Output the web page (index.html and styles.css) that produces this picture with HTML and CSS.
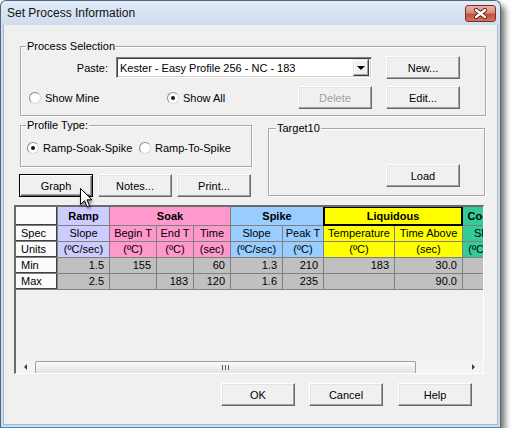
FILE: index.html
```html
<!DOCTYPE html>
<html lang="en">
<head>
  <meta charset="UTF-8">
  <title>Set Process Information</title>
  <link rel="stylesheet" href="styles.css">
</head>
<body>
  <div class="window">
    <!-- title bar -->
    <div class="titlebar">
      <span class="title">Set Process Information</span>
      <div class="close">
        <svg width="29" height="15" viewBox="0 0 29 15">
          <path d="M10 4 L19 11 M19 4 L10 11" stroke="#5a2018" stroke-width="4.2" stroke-linecap="round" fill="none"/>
          <path d="M10 4 L19 11 M19 4 L10 11" stroke="#fff" stroke-width="2.4" stroke-linecap="round" fill="none"/>
        </svg>
      </div>
    </div>

    <div class="client">
      <!-- process selection -->
      <div class="group process">
        <span class="legend">Process Selection</span>
        <div class="paste-row">
          <span class="paste-label">Paste:</span>
          <div class="combo">
            <span class="combo-text">Kester - Easy Profile 256 - NC - 183</span>
            <span class="combo-btn"><span class="arrow-down"></span></span>
          </div>
          <button class="btn gap14">New...</button>
        </div>
        <div class="show-row">
          <span class="radio-opt mine"><span class="radio"></span>Show Mine</span>
          <span class="radio-opt all"><span class="radio checked"></span>Show All</span>
          <button class="btn" disabled>Delete</button>
          <button class="btn gap14">Edit...</button>
        </div>
      </div>

      <div class="middle">
        <div class="left-col">
          <div class="group profile">
            <span class="legend">Profile Type:</span>
            <div class="profile-row">
              <span class="radio-opt ramp-soak"><span class="radio checked"></span>Ramp-Soak-Spike</span>
              <span class="radio-opt"><span class="radio"></span>Ramp-To-Spike</span>
            </div>
          </div>
          <div class="btn-row">
            <button class="btn default">Graph</button>
            <button class="btn">Notes...</button>
            <button class="btn">Print...</button>
          </div>
        </div>
        <div class="group target">
          <span class="legend">Target10</span>
          <button class="btn">Load</button>
        </div>
      </div>

      <!-- spec grid -->
      <div class="grid">
        <div class="sheet-area">
          <div class="sheet">
            <div class="cell rh"></div>
            <div class="cell hd ramp">Ramp</div>
            <div class="cell hd soak span3">Soak</div>
            <div class="cell hd spike span2">Spike</div>
            <div class="cell hd liq span2 focus">Liquidous</div>
            <div class="cell hd cool">Cooling</div>

            <div class="cell rh">Spec</div>
            <div class="cell ramp">Slope</div>
            <div class="cell soak">Begin T</div>
            <div class="cell soak">End T</div>
            <div class="cell soak">Time</div>
            <div class="cell spike">Slope</div>
            <div class="cell spike">Peak T</div>
            <div class="cell liq">Temperature</div>
            <div class="cell liq">Time Above</div>
            <div class="cell cool">Slope</div>

            <div class="cell rh">Units</div>
            <div class="cell ramp">(ºC/sec)</div>
            <div class="cell soak">(ºC)</div>
            <div class="cell soak">(ºC)</div>
            <div class="cell soak">(sec)</div>
            <div class="cell spike">(ºC/sec)</div>
            <div class="cell spike">(ºC)</div>
            <div class="cell liq">(ºC)</div>
            <div class="cell liq">(sec)</div>
            <div class="cell cool">(ºC/sec)</div>

            <div class="cell rh">Min</div>
            <div class="cell val">1.5</div>
            <div class="cell val">155</div>
            <div class="cell val"></div>
            <div class="cell val">60</div>
            <div class="cell val">1.3</div>
            <div class="cell val">210</div>
            <div class="cell val">183</div>
            <div class="cell val">30.0</div>
            <div class="cell val"></div>

            <div class="cell rh">Max</div>
            <div class="cell val">2.5</div>
            <div class="cell val"></div>
            <div class="cell val">183</div>
            <div class="cell val">120</div>
            <div class="cell val">1.6</div>
            <div class="cell val">235</div>
            <div class="cell val"></div>
            <div class="cell val">90.0</div>
            <div class="cell val"></div>
          </div>
        </div>
        <div class="hscroll">
          <span class="sb-arrow"><span class="arrow-left"></span></span>
          <span class="thumb"><span class="grip"></span></span>
          <span class="track"></span>
          <span class="sb-arrow"><span class="arrow-right"></span></span>
        </div>
      </div>

      <div class="footer">
        <button class="btn">OK</button>
        <button class="btn gap14">Cancel</button>
        <button class="btn gap15">Help</button>
      </div>
    </div>

    <!-- mouse pointer over Graph -->
    <svg class="cursor" width="14" height="21" viewBox="0 0 14 21">
      <path d="M0.5 0.5 L0.5 16.5 L4.5 12.7 L7.2 18.8 L9.6 17.8 L7 11.8 L12 11.8 Z" fill="#fff" stroke="#000" stroke-width="1" stroke-linejoin="round"/>
    </svg>
  </div>
</body>
</html>
```

FILE: styles.css
```css
* {
  box-sizing: border-box;
}

body {
  margin: 0;
  background: #fff;
  font-family: "Liberation Sans", Arial, sans-serif;
  font-size: 11px;
  color: #000;
}

/* window frame */
.window {
  position: relative;
  width: 501px;
  height: 428px;
  padding: 0 2px 2px;
  display: flex;
  flex-direction: column;
  border: 1px solid #52667e;
  border-bottom-color: #3a8fc4;
  border-radius: 6px 6px 0 0;
  background: linear-gradient(#e2ebf7, #cfdcee 24px, #cfdcee);
  box-shadow: 4px 5px 6px rgba(0, 0, 0, .55);
}

.titlebar {
  height: 24px;
  display: flex;
  align-items: center;
  justify-content: space-between;
  padding: 0 2px 0 4px;
}

.title {
  font-size: 12px;
  color: #111;
}

.close {
  width: 31px;
  height: 17px;
  border: 1px solid #7a2f26;
  border-radius: 3px;
  background: linear-gradient(#ecb3a7, #d98c7c 45%, #c4503e 55%, #d3735f);
  display: flex;
  align-items: center;
  justify-content: center;
}

.client {
  flex: 1;
  background: #f0f0f0;
  border: 1px solid #a7b9d0;
  border-top: 0;
}

/* group boxes */
.group {
  position: relative;
  border: 1px solid #a8a8a8;
  box-shadow: inset 1px 1px #fff, 1px 1px #fff;
}

.legend {
  position: absolute;
  top: -7px;
  left: 5px;
  padding: 0 1px;
  line-height: 13px;
  background: #f0f0f0;
}

.process {
  width: 466px;
  height: 70px;
  margin: 21px 0 0 16px;
}

.paste-row {
  display: flex;
  align-items: center;
  height: 23px;
  margin-top: 9px;
}

.paste-label {
  width: 87px;
  text-align: right;
}

.combo {
  width: 256px;
  height: 21px;
  margin-left: 8px;
  display: flex;
  align-items: center;
  justify-content: space-between;
  background: #fff;
  border: 1px solid;
  border-color: #808080 #fff #fff #808080;
  box-shadow: inset 1px 1px #404040, inset -1px -1px #d4d0c8;
  padding: 1px 2px 1px 3px;
}

.combo-btn {
  width: 16px;
  height: 17px;
  display: flex;
  align-items: center;
  justify-content: center;
  background: #f0f0f0;
  border: 1px solid;
  border-color: #e3e3e3 #404040 #404040 #e3e3e3;
  box-shadow: inset -1px -1px #a0a0a0, inset 1px 1px #fff;
}

.arrow-down {
  border-left: 4px solid transparent;
  border-right: 4px solid transparent;
  border-top: 4px solid #000;
}

.show-row {
  display: flex;
  align-items: center;
  height: 23px;
  margin-top: 7px;
  padding-left: 8px;
}

.radio-opt {
  display: flex;
  align-items: center;
  gap: 4px;
}

.mine {
  width: 138px;
}

.all {
  width: 131px;
}

.radio {
  width: 12px;
  height: 12px;
  border-radius: 50%;
  border: 1px solid;
  border-color: #8a8a8a #d8d8d8 #d8d8d8 #8a8a8a;
  background: #fff;
  display: flex;
  align-items: center;
  justify-content: center;
}

.radio.checked::after {
  content: "";
  width: 4px;
  height: 4px;
  border-radius: 50%;
  background: #111;
}

/* buttons */
.btn {
  width: 74px;
  height: 23px;
  padding: 0;
  font: inherit;
  color: #000;
  background: #f0f0f0;
  border: 1px solid;
  border-color: #fff #696969 #696969 #fff;
  box-shadow: inset -1px -1px #a0a0a0, inset 1px 1px #e3e3e3;
}

.btn:disabled {
  color: #a0a0a0;
}

.btn.default {
  border-color: #000;
  box-shadow: inset 1px 1px #fff, inset -1px -1px #696969, inset -2px -2px #a0a0a0;
}

.gap14 {
  margin-left: 14px;
}

.gap15 {
  margin-left: 15px;
}

.middle {
  display: flex;
  align-items: flex-start;
  margin: 9px 0 0 16px;
}

.left-col {
  width: 232px;
}

.profile {
  height: 42px;
}

.profile-row {
  display: flex;
  align-items: center;
  height: 14px;
  margin-top: 15px;
  padding-left: 6px;
}

.ramp-soak {
  width: 112px;
}

.btn-row {
  display: flex;
  gap: 5px;
  margin: 7px 0 0 -1px;
}

.target {
  width: 217px;
  height: 68px;
  margin: 3px 0 0 16px;
  padding: 35px 0 0 117px;
}

.target .legend {
  left: 7px;
}

/* spec grid */
.grid {
  width: 470px;
  height: 169px;
  margin: 8px 0 0 10px;
  display: flex;
  flex-direction: column;
  border-style: solid;
  border-width: 2px 1px 1px 2px;
  border-color: #6a6a6a #fff #fff #6a6a6a;
}

.sheet-area {
  flex: 1;
  overflow: hidden;
}

.sheet {
  display: grid;
  width: max-content;
  grid-template-columns: 41px 51px 46px 36px 36px 51px 40px 70px 67px 50px;
  grid-template-rows: 18px repeat(4, 15px);
  gap: 1px;
  padding: 0 1px 1px 0;
  background: #808080;
}

.cell {
  line-height: 15px;
  text-align: center;
  white-space: nowrap;
  overflow: hidden;
}

.hd {
  line-height: 18px;
  font-weight: bold;
}

.span2 {
  grid-column: span 2;
}

.span3 {
  grid-column: span 3;
}

.rh {
  text-align: left;
  padding-left: 5px;
  background: #fbfbfb;
  box-shadow: inset -1px -1px #404040;
}

.ramp { background: #ccccff; }
.soak { background: #ff99cc; }
.spike { background: #99ccff; }
.liq { background: #ffff00; }
.cool { background: #33cc99; }

.val {
  background: #c0c0c0;
  text-align: right;
  padding-right: 5px;
}

.focus {
  box-shadow: 0 0 0 1px #000, inset 0 0 0 1px #000;
}

.hscroll {
  height: 12px;
  display: flex;
  background: #f4f4f4;
}

.sb-arrow {
  width: 19px;
  display: flex;
  align-items: center;
  justify-content: center;
}

.arrow-left {
  border-top: 3px solid transparent;
  border-bottom: 3px solid transparent;
  border-right: 3px solid #404040;
}

.arrow-right {
  border-top: 3px solid transparent;
  border-bottom: 3px solid transparent;
  border-left: 3px solid #404040;
}

.thumb {
  width: 381px;
  display: flex;
  align-items: center;
  justify-content: center;
  border: 1px solid #a0a0a0;
  border-bottom: 0;
  border-radius: 2px 2px 0 0;
  background: linear-gradient(#fbfbfb, #e2e2e2);
}

.grip {
  width: 7px;
  height: 5px;
  background: repeating-linear-gradient(90deg, #5a5a5a 0 1px, transparent 1px 3px);
}

.track {
  flex: 1;
}

.footer {
  display: flex;
  justify-content: flex-end;
  margin-top: 9px;
  padding-right: 25px;
}

.cursor {
  position: absolute;
  left: 79px;
  top: 187px;
  filter: drop-shadow(1px 2px 1.5px rgba(0, 0, 0, .45));
}
```
